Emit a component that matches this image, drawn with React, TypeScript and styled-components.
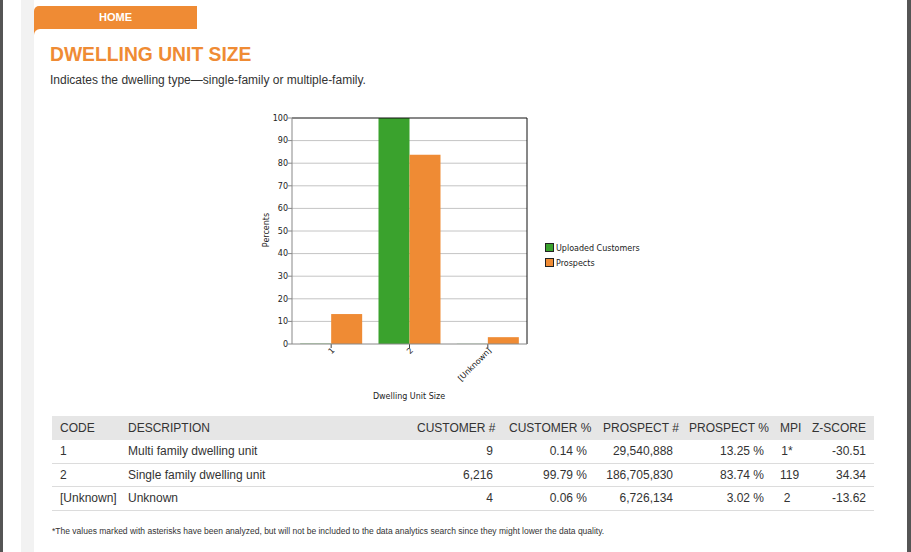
import styled, { createGlobalStyle } from "styled-components";

const ORANGE = "#ef8b34";
const GREEN = "#3aa22d";

const GlobalStyle = createGlobalStyle`
  html, body {
    margin: 0;
    padding: 0;
    background: #fff;
  }
  body {
    font-family: "Liberation Sans", Arial, sans-serif;
    color: #333;
  }
`;

const Page = styled.div`
  display: flex;
  height: 552px;
  overflow: hidden;
`;

const Edge = styled.div<{ $w: number }>`
  width: ${(p) => p.$w}px;
  flex-shrink: 0;
  background: #555;
`;

const Gutter = styled.div`
  width: 18px;
  flex-shrink: 0;
  background: #fff;
`;

const Rail = styled.div`
  width: 13px;
  flex-shrink: 0;
  background: #f2f2f2;
`;

const Main = styled.div`
  flex: 1;
  display: flex;
  flex-direction: column;
  padding-top: 6px;
  min-width: 0;
`;

const Tab = styled.div`
  width: 163px;
  height: 23px;
  line-height: 22px;
  background: ${ORANGE};
  border-top-left-radius: 5px;
  color: #fff;
  font-size: 11px;
  font-weight: bold;
  text-align: center;
`;

const PanelShell = styled.div`
  flex: 1;
  background: linear-gradient(${ORANGE}, ${ORANGE}) no-repeat 0 0 / 12px 12px;
`;

const Panel = styled.div`
  height: 100%;
  box-sizing: border-box;
  padding: 15px 0 0 16px;
  background: #fff;
  border-top-left-radius: 6px;
`;

const Title = styled.h1`
  margin: 0;
  font-size: 19.3px;
  line-height: 22px;
  font-weight: bold;
  color: ${ORANGE};
`;

const Subtitle = styled.p`
  margin: 7px 0 0;
  font-size: 12px;
  line-height: 15px;
  color: #333;
`;

const ChartSvg = styled.svg`
  display: block;
  margin: 20px 0 0 190px;
  font-family: "DejaVu Sans", Verdana, sans-serif;
`;

const Table = styled.table`
  margin: 8px 0 0 2px;
  width: 822px;
  table-layout: fixed;
  border-collapse: collapse;
  font-size: 12px;
  color: #333;
`;

const HeadCell = styled.th<{ $align?: string }>`
  height: 24px;
  padding: 0 8px;
  background: #e6e6e6;
  font-weight: normal;
  text-align: ${(p) => p.$align ?? "left"};
  white-space: nowrap;
`;

const Row = styled.tr`
  border-bottom: 1px solid #dcdcdc;
`;

const Cell = styled.td<{ $align?: string }>`
  height: 22.5px;
  padding: 0 8px;
  text-align: ${(p) => p.$align ?? "left"};
  white-space: nowrap;
`;

const Note = styled.p`
  margin: 15px 0 0 2px;
  font-size: 8.5px;
  line-height: 11px;
  color: #333;
`;

type Row = {
  code: string;
  desc: string;
  cust: string;
  custPct: string;
  pros: string;
  prosPct: string;
  mpi: string;
  z: string;
  c: number;
  p: number;
};

const rows: Row[] = [
  { code: "1", desc: "Multi family dwelling unit", cust: "9", custPct: "0.14 %", pros: "29,540,888", prosPct: "13.25 %", mpi: "1*", z: "-30.51", c: 0.14, p: 13.25 },
  { code: "2", desc: "Single family dwelling unit", cust: "6,216", custPct: "99.79 %", pros: "186,705,830", prosPct: "83.74 %", mpi: "119", z: "34.34", c: 100, p: 83.74 },
  { code: "[Unknown]", desc: "Unknown", cust: "4", custPct: "0.06 %", pros: "6,726,134", prosPct: "3.02 %", mpi: "2", z: "-13.62", c: 0.06, p: 3.02 },
];

const columns: { label: string; width: number; align: string }[] = [
  { label: "CODE", width: 68, align: "left" },
  { label: "DESCRIPTION", width: 289, align: "left" },
  { label: "CUSTOMER #", width: 92, align: "right" },
  { label: "CUSTOMER %", width: 94, align: "right" },
  { label: "PROSPECT #", width: 86, align: "right" },
  { label: "PROSPECT %", width: 91, align: "right" },
  { label: "MPI", width: 30, align: "center" },
  { label: "Z-SCORE", width: 72, align: "right" },
];

// plot box in page coordinates (viewBox is offset to match)
const L = 292;
const R = 527;
const T = 118;
const B = 344;
const scale = (B - T) / 100;
const catW = (R - L) / rows.length;
const barW = 31;

function Chart() {
  const ticks = [0, 10, 20, 30, 40, 50, 60, 70, 80, 90, 100];
  return (
    <ChartSvg width={420} height={300} viewBox="240 108 420 300">
      {ticks.slice(1, -1).map((t) => (
        <line key={t} x1={L} x2={R} y1={B - t * scale} y2={B - t * scale} stroke="#c4c4c4" strokeWidth={1} />
      ))}
      {rows.map((r, i) => {
        const cx = L + catW * (i + 0.5);
        return (
          <g key={r.code}>
            <rect x={cx - barW} y={B - r.c * scale} width={barW} height={r.c * scale} fill={GREEN} />
            <rect x={cx} y={B - r.p * scale} width={barW} height={r.p * scale} fill={ORANGE} />
            <line x1={cx} x2={cx} y1={B} y2={B + 4} stroke="#444" />
            <text
              transform={`translate(${cx + 2},${B + 5}) rotate(-45)`}
              textAnchor="end"
              dy="0.35em"
              fontSize={8}
              fill="#222"
            >
              {r.code}
            </text>
          </g>
        );
      })}
      <line x1={L} x2={R} y1={T} y2={T} stroke="#111" />
      <line x1={R} x2={R} y1={T} y2={B} stroke="#111" />
      <line x1={L} x2={L} y1={T} y2={B} stroke="#888" />
      <line x1={L} x2={R} y1={B} y2={B} stroke="#888" />
      {ticks.map((t) => (
        <g key={t}>
          <line x1={L - 4} x2={L} y1={B - t * scale} y2={B - t * scale} stroke="#888" />
          <text x={L - 4} y={B - t * scale} dy="0.35em" textAnchor="end" fontSize={8} fill="#222">
            {t}
          </text>
        </g>
      ))}
      <text transform="translate(269,230) rotate(-90)" textAnchor="middle" fontSize={8} fill="#222">
        Percents
      </text>
      <text x={409} y={399} textAnchor="middle" fontSize={8} fill="#222">
        Dwelling Unit Size
      </text>
      <rect x={545.5} y={243.5} width={8} height={8} fill={GREEN} stroke="#222" />
      <text x={556} y={251} fontSize={8} fill="#222">
        Uploaded Customers
      </text>
      <rect x={545.5} y={258.5} width={8} height={8} fill={ORANGE} stroke="#222" />
      <text x={556} y={266} fontSize={8} fill="#222">
        Prospects
      </text>
    </ChartSvg>
  );
}

export default function App() {
  return (
    <>
      <GlobalStyle />
      <Page>
        <Edge $w={3} />
        <Gutter />
        <Rail />
        <Main>
          <Tab>HOME</Tab>
          <PanelShell>
            <Panel>
              <Title>DWELLING UNIT SIZE</Title>
              <Subtitle>Indicates the dwelling type—single-family or multiple-family.</Subtitle>
              <Chart />
              <Table>
                <colgroup>
                  {columns.map((c) => (
                    <col key={c.label} style={{ width: c.width }} />
                  ))}
                </colgroup>
                <thead>
                  <tr>
                    {columns.map((c) => (
                      <HeadCell key={c.label} $align={c.align}>
                        {c.label}
                      </HeadCell>
                    ))}
                  </tr>
                </thead>
                <tbody>
                  {rows.map((r) => (
                    <Row key={r.code}>
                      <Cell>{r.code}</Cell>
                      <Cell>{r.desc}</Cell>
                      <Cell $align="right">{r.cust}</Cell>
                      <Cell $align="right">{r.custPct}</Cell>
                      <Cell $align="right">{r.pros}</Cell>
                      <Cell $align="right">{r.prosPct}</Cell>
                      <Cell $align="center">{r.mpi}</Cell>
                      <Cell $align="right">{r.z}</Cell>
                    </Row>
                  ))}
                </tbody>
              </Table>
              <Note>
                *The values marked with asterisks have been analyzed, but will not be included to the data
                analytics search since they might lower the data quality.
              </Note>
            </Panel>
          </PanelShell>
        </Main>
        <Edge $w={4} />
      </Page>
    </>
  );
}
